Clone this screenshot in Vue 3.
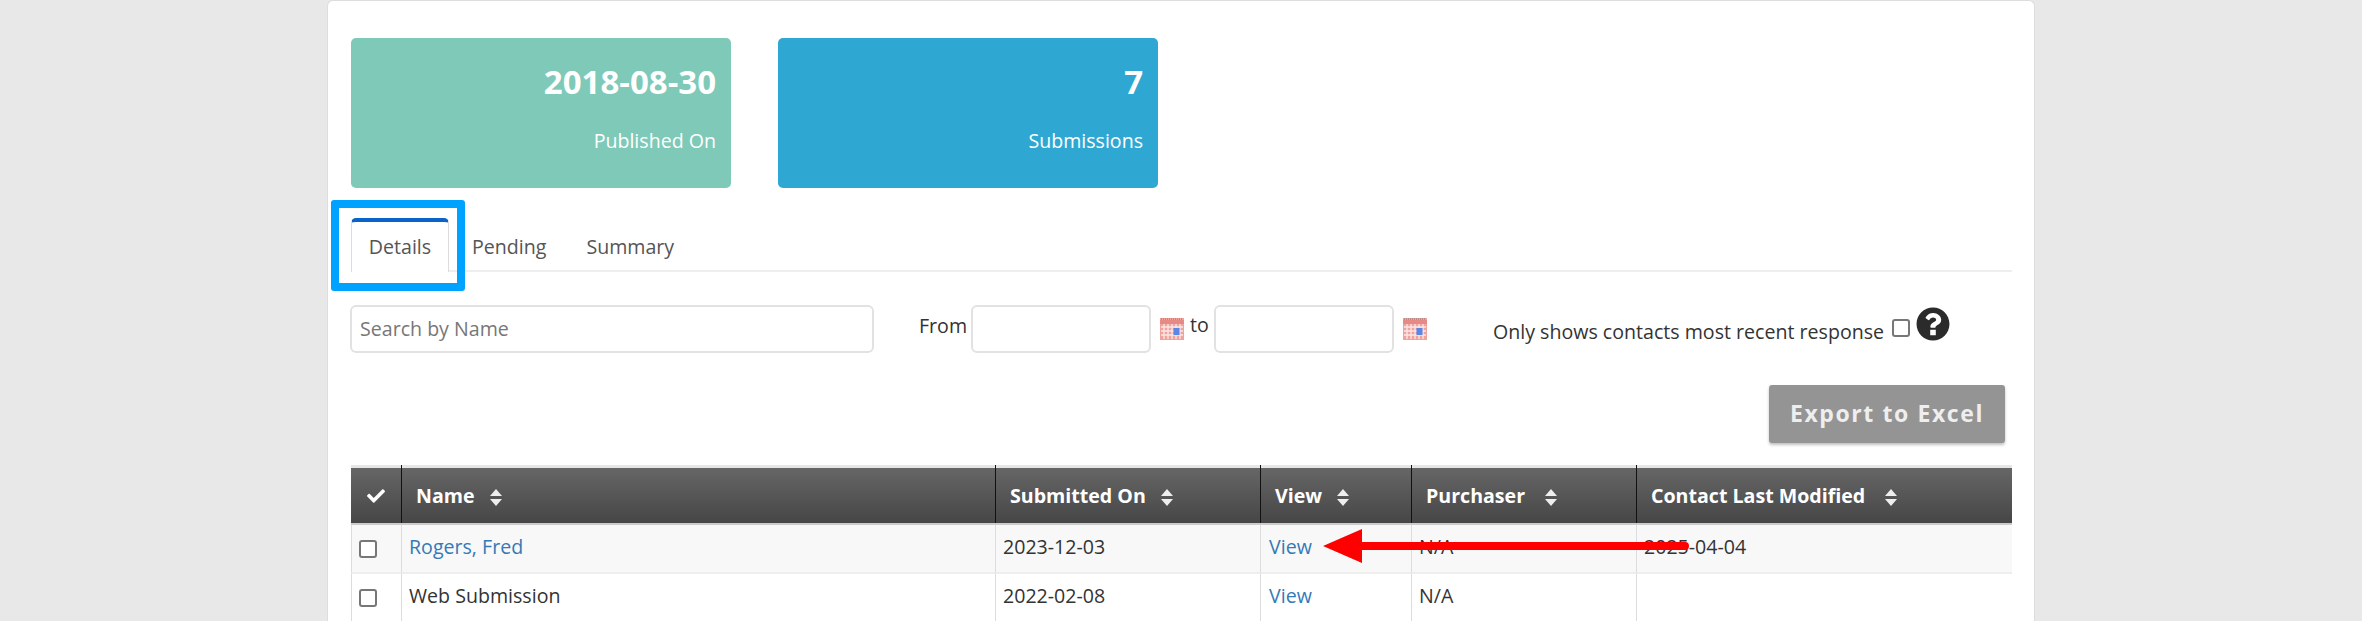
<script setup>
const columns = [
  { label: 'Name', cls: 'c-name' },
  { label: 'Submitted On', cls: 'c-sub' },
  { label: 'View', cls: 'c-view' },
  { label: 'Purchaser', cls: 'c-pur' },
  { label: 'Contact Last Modified', cls: 'c-mod' }
]
const rows = [
  { name: 'Rogers, Fred', link: true, submitted: '2023-12-03', purchaser: 'N/A', modified: '2025-04-04' },
  { name: 'Web Submission', link: false, submitted: '2022-02-08', purchaser: 'N/A', modified: '' }
]
</script>

<template>
  <div class="page">
    <main class="panel">
      <section class="stats">
        <div class="stat green">
          <div class="value">2018-08-30</div>
          <div class="label">Published On</div>
        </div>
        <div class="stat blue">
          <div class="value">7</div>
          <div class="label">Submissions</div>
        </div>
      </section>

      <nav class="tabs">
        <a class="tab active">Details<span class="highlight"></span></a>
        <a class="tab pending">Pending</a>
        <a class="tab summary">Summary</a>
      </nav>

      <section class="filters">
        <input class="field search" type="text" placeholder="Search by Name" />
        <span class="from">From</span>
        <input class="field date" type="text" />
        <svg class="cal" viewBox="0 0 24 22" width="24" height="22">
          <rect width="24" height="22" fill="#f0a29c" />
          <rect y="2" width="24" height="4" fill="#e58a84" />
          <path d="M1 1h22" stroke="#b98a88" stroke-width="2" stroke-dasharray="1 1" />
          <path d="M1 9h22M1 13h22M1 17h22M4 6v15M8 6v15M12 6v15M16 6v15M20 6v15" stroke="#fff" stroke-opacity=".75" stroke-width="1.3" />
          <rect x="13.500" y="10" width="6" height="7" fill="#5a86e6" />
        </svg>
        <span class="to">to</span>
        <input class="field date" type="text" />
        <svg class="cal" viewBox="0 0 24 22" width="24" height="22">
          <rect width="24" height="22" fill="#f0a29c" />
          <rect y="2" width="24" height="4" fill="#e58a84" />
          <path d="M1 1h22" stroke="#b98a88" stroke-width="2" stroke-dasharray="1 1" />
          <path d="M1 9h22M1 13h22M1 17h22M4 6v15M8 6v15M12 6v15M16 6v15M20 6v15" stroke="#fff" stroke-opacity=".75" stroke-width="1.3" />
          <rect x="13.500" y="10" width="6" height="7" fill="#5a86e6" />
        </svg>
        <span class="recent">Only shows contacts most recent response</span>
        <span class="check recent-check"></span>
        <svg class="help" viewBox="0 0 512 512" width="34" height="34">
          <path fill-rule="evenodd" fill="#2b2b2b" d="M504 256c0 136.997-111.043 248-248 248S8 392.997 8 256C8 119.083 119.043 8 256 8s248 111.083 248 248zM262.655 90c-54.497 0-89.255 22.957-116.549 63.758-3.536 5.286-2.353 12.415 2.715 16.258l34.699 26.31c5.205 3.947 12.621 3.008 16.665-2.122 17.864-22.658 30.113-35.797 57.303-35.797 20.429 0 45.698 13.148 45.698 32.958 0 14.976-12.363 22.667-32.534 33.976C247.128 238.528 216 254.941 216 296v4c0 6.627 5.373 12 12 12h56c6.627 0 12-5.373 12-12v-1.333c0-28.462 83.186-29.647 83.186-106.667 0-58.002-60.165-102-116.531-102zM214 342h84v84h-84z" />
        </svg>
      </section>

      <div class="actions">
        <button class="export" type="button">Export to Excel</button>
      </div>

      <div class="table-wrap">
        <table class="grid">
          <thead>
            <tr>
              <th class="c-check">
                <svg class="tick" viewBox="0 0 512 512" width="18" height="18">
                  <path fill="#fff" d="M173.898 439.404l-166.4-166.4c-9.997-9.997-9.997-26.206 0-36.204l36.203-36.204c9.997-9.998 26.207-9.998 36.204 0L192 312.69 432.095 72.596c9.997-9.997 26.207-9.997 36.204 0l36.203 36.204c9.997 9.997 9.997 26.206 0 36.204l-294.4 294.401c-9.998 9.997-26.207 9.997-36.204-.001z" />
                </svg>
              </th>
              <th v-for="c in columns" :key="c.label" :class="c.cls">
                <span>{{ c.label }}</span>
                <svg class="sort" viewBox="0 0 12 17" width="12" height="17">
                  <path d="M6 0 12 7H0z M0 10h12L6 17z" fill="#eee" />
                </svg>
              </th>
            </tr>
          </thead>
          <tbody>
            <tr v-for="r in rows" :key="r.name">
              <td class="c-check"><span class="check"></span></td>
              <td :class="{ link: r.link }">{{ r.name }}</td>
              <td>{{ r.submitted }}</td>
              <td class="link cell-view">View</td>
              <td>{{ r.purchaser }}</td>
              <td>{{ r.modified }}</td>
            </tr>
          </tbody>
        </table>
        <svg class="arrow" viewBox="0 0 366 34" width="366" height="34">
          <path d="M0 17 39 0V13H362a4 4 0 0 1 0 8H39V34z" fill="#ff0000" />
        </svg>
      </div>
    </main>
  </div>
</template>

<style>
html, body { margin: 0; background: #e8e8e8; }
</style>

<style scoped>
.page {
  height: 621px;
  overflow: hidden;
  background: #e8e8e8;
  font-family: "Open Sans", sans-serif;
  font-size: 19.6px;
  color: #333;
}
.panel {
  box-sizing: border-box;
  width: 1708px;
  height: 640px;
  margin-left: 327px;
  padding: 37px 22px 0 23px;
  background: #fff;
  border: 1px solid #ddd;
  border-bottom: 0;
  border-radius: 6px 6px 0 0;
}
.stats { display: flex; gap: 47px; }
.stat {
  box-sizing: border-box;
  width: 380px;
  height: 150px;
  padding: 22px 15px 0;
  border-radius: 5px;
  color: #fff;
  text-align: right;
}
.green { background: #7ec9b7; }
.blue { background: #2ea8d2; }
.value { font-size: 33px; font-weight: 700; line-height: 44px; }
.label { margin-top: 22px; font-size: 19.6px; line-height: 30px; }

.tabs {
  display: flex;
  height: 52px;
  margin-top: 30px;
  border-bottom: 2px solid #eee;
}
.tab {
  position: relative;
  box-sizing: border-box;
  height: 54px;
  padding: 16px 21px 0;
  color: #555;
  line-height: 26px;
}
.tab.pending { margin-left: 2px; }
.tab.summary { margin-left: -2px; }
.tab.active {
  width: 98px;
  padding: 12px 0 0;
  text-align: center;
  background: #fff;
  border: 1px solid #ddd;
  border-top: 4px solid #0a63c9;
  border-bottom: 0;
  border-radius: 5px 5px 0 0;
}
.highlight {
  position: absolute;
  left: -21px;
  top: -22px;
  width: 118px;
  height: 75px;
  border: 8px solid #00a2ff;
  border-radius: 3px;
  pointer-events: none;
}

.filters {
  display: flex;
  align-items: flex-start;
  height: 48px;
  margin-top: 33px;
}
.field {
  box-sizing: border-box;
  height: 48px;
  border: 2px solid #e2e2e2;
  border-radius: 6px;
  background: #fff;
  font: inherit;
  padding: 0 8px;
  outline: 0;
}
.field::placeholder { color: #777; opacity: 1; }
.search { width: 524px; margin-left: -1px; padding-bottom: 2px; }
.from { width: 48px; margin: 8px 4px 0 45px; line-height: 26px; white-space: nowrap; }
.date { width: 180px; }
.cal { margin: 13px 0 0 9px; flex: none; }
.to { width: 18px; margin: 7px 6px 0 6px; line-height: 26px; }
.recent { width: 388px; margin: 14px 11px 0 66px; line-height: 26px; white-space: nowrap; }
.check {
  display: block;
  box-sizing: border-box;
  width: 18px;
  height: 18px;
  background: #fff;
  border: 2px solid #777;
  border-radius: 3px;
}
.recent-check { margin-top: 14px; flex: none; }
.help { display: block; flex: none; margin: 2px 0 0 6px; }

.actions {
  display: flex;
  justify-content: flex-end;
  margin: 32px 7px 0 0;
}
.export {
  width: 236px;
  height: 58px;
  padding: 0 0 2px;
  border: 0;
  border-radius: 3px;
  background: #949494;
  box-shadow: 0 2px 3px rgba(0, 0, 0, .25);
  color: #eee;
  font: 700 23px "Open Sans", sans-serif;
  letter-spacing: 1.6px;
}

.table-wrap { position: relative; margin-top: 22px; }
.grid {
  width: 1661px;
  table-layout: fixed;
  border-collapse: separate;
  border-spacing: 0;
}
th {
  position: relative;
  box-sizing: border-box;
  height: 60px;
  padding: 0 0 1px 15px;
  text-align: left;
  color: #fff;
  font-size: 19.6px;
  font-weight: 700;
  background: linear-gradient(#666, #464646) padding-box;
  border-top: 3px solid #e6e6e6;
  border-bottom: 2px solid #ccc;
  white-space: nowrap;
}
th + th::before {
  content: "";
  position: absolute;
  left: 0;
  top: -3px;
  bottom: 0;
  width: 1px;
  background: #111;
}
td {
  box-sizing: border-box;
  height: 49px;
  padding: 0 0 4px 7px;
  border-left: 1px solid #ddd;
  border-bottom: 2px solid #eee;
  background: #fff;
}
tbody tr:first-child td { background: #f8f8f8; }
.link { color: #337ab7; }
.c-check { width: 50px; }
td.c-check { padding: 0 0 0 7px; }
td.cell-view { padding-left: 8px; }
th.c-check { padding: 0; text-align: center; }
.tick { display: block; margin: 0 auto; }
.c-name { width: 594px; }
.c-sub { width: 265px; }
.c-view { width: 151px; }
.c-pur { width: 225px; }
.sort { margin-left: 15px; vertical-align: -3px; }
.c-pur .sort, .c-mod .sort { margin-left: 20px; }
.arrow {
  position: absolute;
  left: 972px;
  top: 64px;
  pointer-events: none;
}
</style>
